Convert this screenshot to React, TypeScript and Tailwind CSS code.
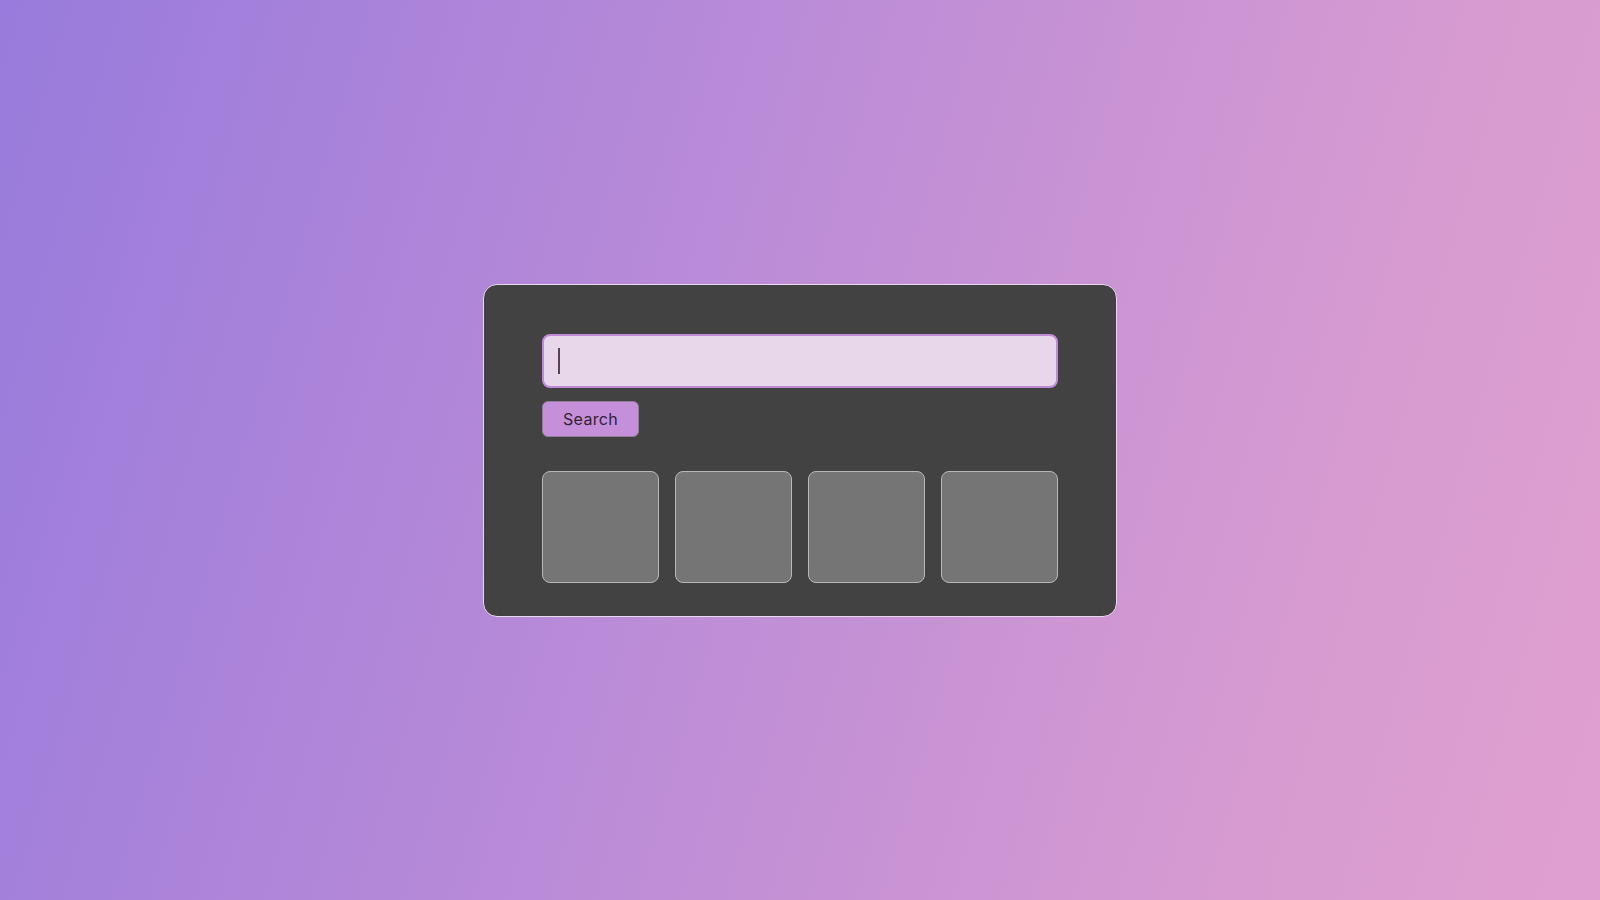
import React from "react";

export default function App() {
  return (
    <div className="w-full h-[900px] flex items-center justify-center bg-[linear-gradient(106deg,#987bdc_0%,#b88ad8_40%,#d79bd1_80%,#e0a0cf_100%)] font-['Inter','Noto_Sans',sans-serif]">
      <div className="w-[634px] bg-[#424242] border border-[#e9d9ef] rounded-[14px] pt-[49px] px-[58px] pb-[33px] flex flex-col">
        <div className="relative h-[54px]">
          <input
            type="text"
            aria-label="search"
            className="w-full h-full bg-[#e8d6ea] border-2 border-[#c08ad6] rounded-lg px-4 text-[#3b2b3c] outline-none caret-transparent"
          />
          <span className="absolute left-[16px] top-[14px] w-[2px] h-[26px] bg-[#5b405c]" />
        </div>
        <button className="mt-[13px] w-[97px] h-[36px] rounded-md bg-[#c68fda] border border-[#8f7d99] text-[16px] tracking-[0.3px] text-[#2e2433] flex items-center justify-center">
          Search
        </button>
        <div className="mt-[34px] grid grid-cols-4 gap-4">
          <div className="h-[112px] rounded-lg bg-[#757575] border border-[#b8b8b8]" />
          <div className="h-[112px] rounded-lg bg-[#757575] border border-[#b8b8b8]" />
          <div className="h-[112px] rounded-lg bg-[#757575] border border-[#b8b8b8]" />
          <div className="h-[112px] rounded-lg bg-[#757575] border border-[#b8b8b8]" />
        </div>
      </div>
    </div>
  );
}
